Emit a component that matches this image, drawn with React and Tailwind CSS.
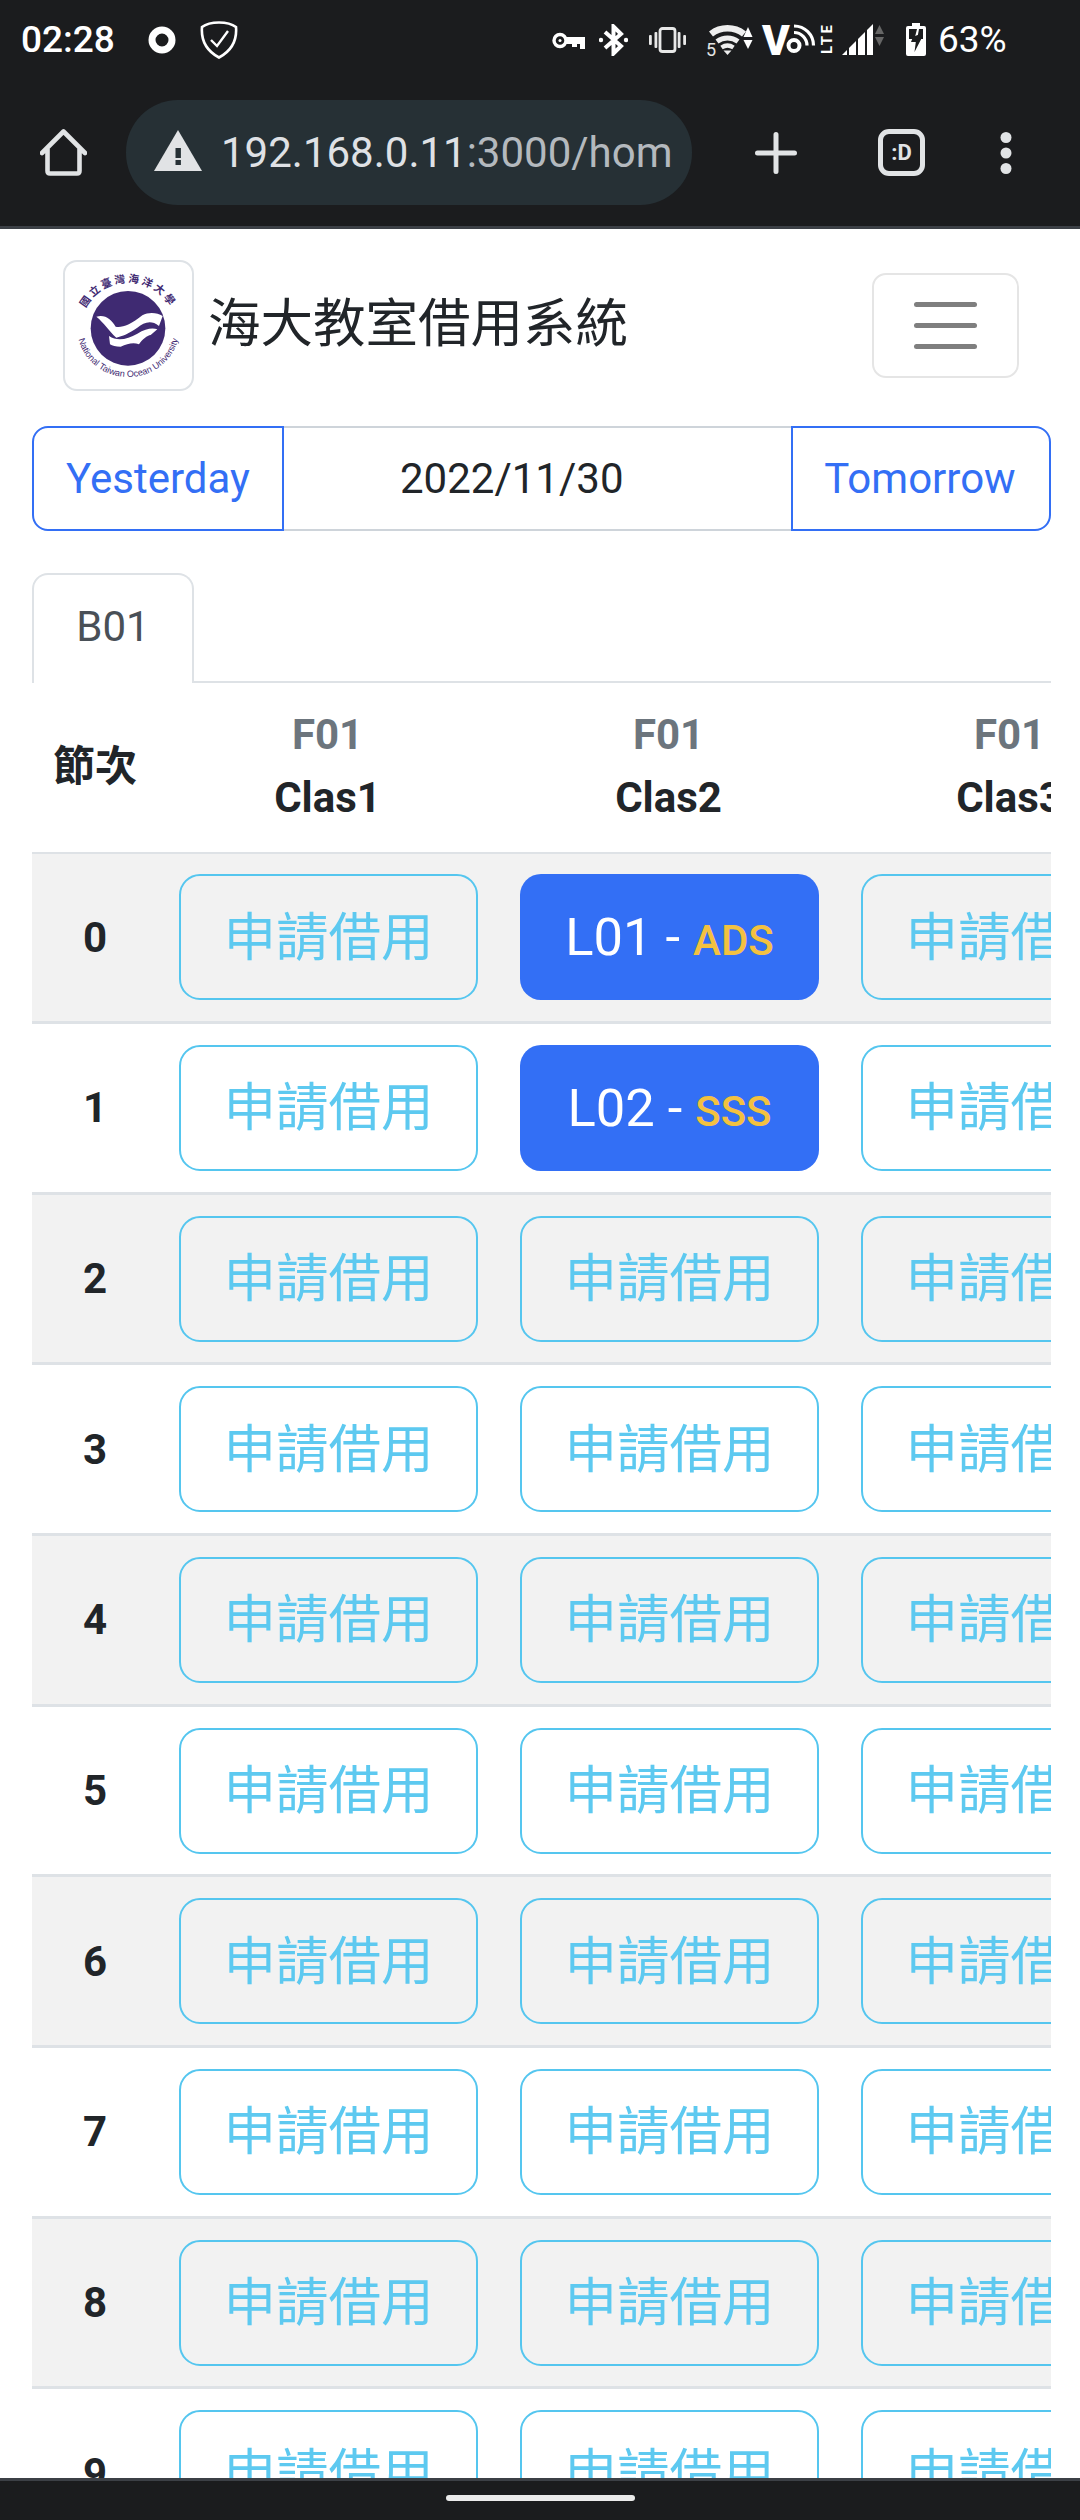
import React from "react";

const ROWS = [0, 1, 2, 3, 4, 5, 6, 7, 8, 9];
const COLS = ["Clas1", "Clas2", "Clas3"];
const BOOKED = { "0-1": ["L01", "ADS"], "1-1": ["L02", "SSS"] };

function Logo() {
  return (
    <div className="w-[131px] h-[131px] shrink-0 rounded-[14px] border-[2px] border-[#dee2e6] bg-white overflow-hidden">
      <svg viewBox="43 33 381 381" className="w-full h-full block">
        <defs>
          <path id="cnArc" d="M98 186 A144 144 0 0 1 366 186" />
          <path id="enArc" d="M80 232 A153 146 0 0 0 386 232" />
        </defs>
        <circle cx="232" cy="232" r="112" fill="#3f2a72" />
        <g transform="translate(0 -10)">
          <path d="M137 207 C165 200 180 215 195 237 C210 242 240 232 275 203 C295 192 320 195 336 205 L325 235 C300 215 280 225 260 240 C235 258 215 265 197 270 C175 250 160 225 137 207 Z" fill="#fff" />
          <path d="M175 265 C200 282 230 275 260 258 C285 243 305 240 320 245 L300 262 C290 263 275 275 265 290 C245 283 230 290 210 297 C195 297 185 295 178 290 Z" fill="#fff" />
        </g>
        <text fill="#3f2a72" fontSize="32" fontWeight="700" fontFamily="'Noto Sans CJK TC', sans-serif" letterSpacing="7">
          <textPath href="#cnArc" startOffset="50%" textAnchor="middle">國立臺灣海洋大學</textPath>
        </text>
        <text fill="#3f2a72" fontSize="27" fontFamily="'Liberation Sans', sans-serif">
          <textPath href="#enArc" startOffset="50%" textAnchor="middle">National Taiwan Ocean University</textPath>
        </text>
      </svg>
    </div>
  );
}

function StatusBar() {
  return (
    <div className="h-[100px] shrink-0 flex items-start justify-between text-white">
      <div className="flex items-start pl-[21px]">
        <span className="mt-[18px] w-[93px] text-[37px] leading-[44px] font-medium whitespace-nowrap">02:28</span>
        <svg width="28" height="28" viewBox="0 0 28 28" className="mt-[26px] ml-[34px]">
          <circle cx="14" cy="14" r="10" fill="none" stroke="#fff" strokeWidth="7" />
        </svg>
        <svg width="38" height="38" viewBox="0 0 38 38" className="mt-[21px] ml-[24px]">
          <path d="M19 1.5 C25 1.5 32 3 36 6 C37 18 33 29 19 36.5 C5 29 1 18 2 6 C6 3 13 1.5 19 1.5 Z" fill="none" stroke="#fff" strokeWidth="2.6" />
          <path d="M11 19 L17 25 L28 10" fill="none" stroke="#fff" strokeWidth="2.4" />
        </svg>
      </div>
      <div className="flex items-start pr-[75px]">
        <svg width="33" height="17" viewBox="0 0 33 17" className="mt-[32px]">
          <circle cx="8" cy="8.5" r="6" fill="none" stroke="#fff" strokeWidth="3.4" />
          <circle cx="8" cy="8.5" r="1.5" fill="#fff" />
          <path d="M14 5 H33 V17 H28 V12 H25 V15 H20 V12 H14 Z" fill="#fff" />
        </svg>
        <svg width="29" height="32" viewBox="0 0 29 32" className="mt-[24px] ml-[14px]">
          <path d="M6 8 L22 22 L14.5 29.5 V2.5 L22 10 L6 24" fill="none" stroke="#fff" strokeWidth="4" />
          <circle cx="2" cy="16" r="2.2" fill="#fff" />
          <circle cx="27" cy="16" r="2.2" fill="#fff" />
        </svg>
        <svg width="37" height="26" viewBox="0 0 37 26" className="mt-[27px] ml-[21px]">
          <rect x="11" y="1.5" width="15" height="23" rx="2.5" fill="none" stroke="#e8e8e8" strokeWidth="2.8" />
          <rect x="5.5" y="5" width="2.8" height="16" rx="1" fill="#e8e8e8" />
          <rect x="28.7" y="5" width="2.8" height="16" rx="1" fill="#e8e8e8" />
          <rect x="0" y="8" width="2.8" height="10" rx="1" fill="#e8e8e8" />
          <rect x="34.2" y="8" width="2.8" height="10" rx="1" fill="#e8e8e8" />
        </svg>
        <svg width="47" height="33" viewBox="0 0 47 33" className="mt-[23px] ml-[20px] overflow-visible">
          <path d="M5 11 A27 27 0 0 1 38 11" fill="none" stroke="#eee" strokeWidth="6.5" />
          <path d="M11 18.5 A18 18 0 0 1 32 18.5" fill="none" stroke="#eee" strokeWidth="5" />
          <path d="M15.5 24.5 A11 11 0 0 1 27.5 24.5" fill="none" stroke="#eee" strokeWidth="4.4" />
          <path d="M17.5 27.5 L25.5 27.5 L21.5 32 Z" fill="#eee" />
          <text x="0" y="33" fontSize="18" fill="#e4e4e4" fontFamily="Roboto, sans-serif">5</text>
          <path d="M42 4 L46.5 14 L37.5 14 Z" fill="#fff" />
          <path d="M37.5 17 L46.5 17 L42 26 Z" fill="#fff" />
        </svg>
        <svg width="71" height="32" viewBox="0 0 71 32" className="mt-[23px] ml-[9px] overflow-visible">
          <text x="0" y="31.5" fontSize="42" fontWeight="900" fill="#fff" fontFamily="Roboto, sans-serif">V</text>
          <circle cx="32" cy="22.5" r="5.5" fill="none" stroke="#fff" strokeWidth="4" />
          <path d="M32 9.5 A13 13 0 0 1 45 22.5" fill="none" stroke="#fff" strokeWidth="3.2" />
          <path d="M32 3 A19.5 19.5 0 0 1 51.5 22.5" fill="none" stroke="#fff" strokeWidth="3.2" />
          <text transform="translate(70 31) rotate(-90)" fontSize="15" fontWeight="700" fill="#fff" fontFamily="Roboto, sans-serif" textLength="29">LTE</text>
        </svg>
        <svg width="45" height="34" viewBox="0 0 45 34" className="mt-[22px] ml-[7px]">
          <polygon points="2,33 7,28 7,33" fill="#fff" />
          <polygon points="9,26 16,19 16,33 9,33" fill="#fff" />
          <polygon points="18,17 25,10 25,33 18,33" fill="#fff" />
          <polygon points="27,8 33,2 33,33 27,33" fill="#fff" />
          <polygon points="39.5,3 44,12 35,12" fill="#666" />
          <polygon points="35,15 44,15 39.5,24" fill="#666" />
        </svg>
        <svg width="20" height="33" viewBox="0 0 20 33" className="mt-[23px] ml-[21px]">
          <path d="M6 0 H14 V3 H18 Q20 3 20 5 V31 Q20 33 18 33 H2 Q0 33 0 31 V5 Q0 3 2 3 H6 Z" fill="#fff" />
          <rect x="3" y="6" width="14" height="10" fill="#1b1c1e" />
          <path d="M13 6 L11.5 14 L9 14 L11 6 Z" fill="#fff" />
          <path d="M11.5 12 L16 14.5 L8.5 29 L9.8 19 L5 19 L7 14 Z" fill="#1b1c1e" />
        </svg>
        <span className="mt-[18px] ml-[12px] w-[67px] text-[37px] leading-[44px] whitespace-nowrap">63%</span>
      </div>
    </div>
  );
}

function Toolbar() {
  return (
    <div className="h-[129px] shrink-0 border-b-[3px] border-[#3c4046] flex items-start">
      <svg width="47" height="47" viewBox="0 0 47 47" className="mt-[29px] ml-[40px]">
        <path d="M2 24 L23.5 2.5 L45 24 M7.5 20 V42 Q7.5 44.5 10 44.5 H37 Q39.5 44.5 39.5 42 V20" fill="none" stroke="#e1e3e5" strokeWidth="4.6" strokeLinecap="round" strokeLinejoin="round" />
      </svg>
      <div className="w-[566px] h-[105px] ml-[39px] rounded-[52px] bg-[#263035] flex items-center pl-[28px] overflow-hidden">
        <svg width="48" height="41" viewBox="0 0 48 41" className="shrink-0 -mt-[5px]">
          <path d="M24 0 L48 41 H0 Z" fill="#e1e3e5" />
          <rect x="21.5" y="18" width="5.4" height="10" fill="#263035" />
          <rect x="21.5" y="30" width="5.4" height="5" fill="#263035" />
        </svg>
        <div className="ml-[19px] w-[450px] overflow-hidden whitespace-nowrap text-[42px] leading-[60px]">
          <span className="text-[#dfe1e5]">192.168.0.11</span>
          <span className="text-[#b4b9be]">:3000/home</span>
        </div>
      </div>
      <svg width="42" height="42" viewBox="0 0 42 42" className="mt-[32px] ml-[63px]">
        <path d="M21 2.5 V39.5 M2.5 21 H39.5" stroke="#e1e3e5" strokeWidth="5" strokeLinecap="round" />
      </svg>
      <div className="mt-[29px] ml-[81px] w-[47px] h-[47px] rounded-[11px] border-[5px] border-[#e1e3e5] flex items-center justify-center text-[#e1e3e5] text-[22px] leading-none font-bold">
        :D
      </div>
      <svg width="12" height="42" viewBox="0 0 12 42" className="mt-[32px] ml-[75px]">
        <circle cx="6" cy="5.5" r="5.5" fill="#e1e3e5" />
        <circle cx="6" cy="21" r="5.5" fill="#e1e3e5" />
        <circle cx="6" cy="36.5" r="5.5" fill="#e1e3e5" />
      </svg>
    </div>
  );
}

function SlotButton({ booking }) {
  if (booking) {
    return (
      <div className="w-[299px] h-[126px] rounded-[21px] bg-[#336ff5] flex items-baseline justify-center pt-[32px] whitespace-nowrap text-white text-[52.5px] leading-[63px]">
        <span>{booking[0]}</span>
        <span className="ml-[13px]">-</span>
        <span className="ml-[13px] text-[#f3c140] text-[42px] font-medium">{booking[1]}</span>
      </div>
    );
  }
  return (
    <div className="w-[299px] h-[126px] rounded-[21px] border-[2px] border-[#55c6ef] flex items-center justify-center pt-[2px] whitespace-nowrap text-[#5dc9f0] text-[52.5px] leading-[63px]">
      申請借用
    </div>
  );
}

export default function App() {
  return (
    <div className="w-[1080px] h-[2520px] flex flex-col overflow-hidden bg-[#1b1c1e] [font-family:Roboto,'Noto_Sans_CJK_TC',sans-serif]">
      <StatusBar />
      <Toolbar />
      <main className="h-[2249px] shrink-0 bg-white overflow-hidden">
        <nav className="pt-[31px] pl-[63px] pr-[61px] flex items-start justify-between">
          <div className="flex items-center">
            <Logo />
            <span className="ml-[14px] text-[52.5px] leading-[63px] text-[#212529] whitespace-nowrap -mt-[2px]">海大教室借用系統</span>
          </div>
          <div className="mt-[13px] w-[147px] h-[105px] rounded-[14px] border-[2px] border-[#e5e5e5] flex flex-col items-center justify-center gap-[16px]">
            <span className="block w-[63px] h-[5px] rounded-full bg-[#7f7f7f]" />
            <span className="block w-[63px] h-[5px] rounded-full bg-[#7f7f7f]" />
            <span className="block w-[63px] h-[5px] rounded-full bg-[#7f7f7f]" />
          </div>
        </nav>

        <div className="mt-[35px] mx-[32px] w-[1019px] h-[105px] flex text-[42px] leading-[63px]">
          <div className="w-[252px] h-full rounded-l-[16px] border-[2px] border-[#336ff5] flex items-center justify-center text-[#336ff5]">Yesterday</div>
          <div className="flex-1 h-full border-y-[2px] border-[#ced4da] flex items-center pl-[116px] text-[#212529]">2022/11/30</div>
          <div className="w-[260px] h-full rounded-r-[16px] border-[2px] border-[#336ff5] flex items-center justify-center pr-[2px] text-[#336ff5]">Tomorrow</div>
        </div>

        <div className="mt-[42px] mx-[32px] w-[1019px] h-[110px] border-b-[2px] border-[#dee2e6] flex">
          <div className="w-[162px] h-[110px] rounded-t-[16px] border-x-[2px] border-t-[2px] border-[#dee2e6] bg-white flex items-center justify-center text-[42px] leading-[63px] text-[#495057] pb-[6px]">B01</div>
        </div>

        <div className="mx-[32px] w-[1019px] overflow-hidden">
          <div className="w-[1200px]">
            <div className="h-[170.5px] border-b-[2px] border-[#dee2e6] flex items-center text-[42px] leading-[63px] font-bold text-[#212529]">
              <div className="w-[126px] shrink-0 text-center -mt-[2px]">節次</div>
              {COLS.map((c) => (
                <div key={c} className="w-[341px] shrink-0 text-center pr-[2px] -mt-[2px]">
                  <div className="text-[#6c757d]">F01</div>
                  <div>{c}</div>
                </div>
              ))}
            </div>
            {ROWS.map((r) => (
              <div key={r} className={`h-[170.67px] border-b-[3px] border-[#dee2e6] flex items-center ${r % 2 === 0 ? "bg-[#f2f2f2]" : "bg-white"}`}>
                <div className="w-[126px] shrink-0 text-center text-[42px] leading-[63px] font-bold text-[#212529]">{r}</div>
                {COLS.map((c, i) => (
                  <div key={c} className="w-[341px] shrink-0 flex justify-center">
                    <SlotButton booking={BOOKED[`${r}-${i}`]} />
                  </div>
                ))}
              </div>
            ))}
          </div>
        </div>
      </main>
      <div className="flex-1 border-t-[3px] border-[#3c4046] bg-[#1b1c1e] flex justify-center pt-[14px]">
        <span className="block w-[189px] h-[6px] rounded-full bg-[#ebebeb]" />
      </div>
    </div>
  );
}
